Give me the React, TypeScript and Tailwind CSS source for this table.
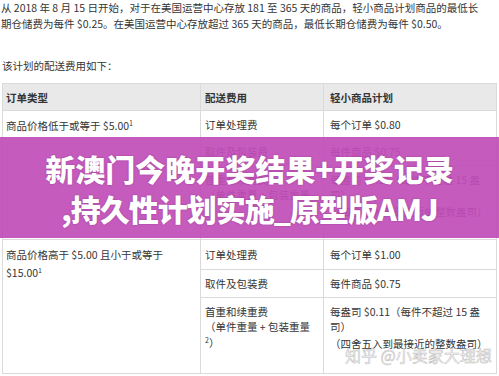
import React from 'react';

const cell = "border-r border-b border-[#dadada] text-[10.5px] leading-[15.5px] pt-[6px]";

const App: React.FC = () => {
  return (
    <div className="relative w-[499px] h-[376px] overflow-hidden bg-white text-[#353535] font-['Noto_Sans_CJK_SC',sans-serif]">
      {/* intro text */}
      <div className="pl-[1px] text-[10.5px] leading-[15.5px] whitespace-nowrap">
        <p>从 2018 年 8 月 15 日开始，对于在美国运营中心存放 181 至 365 天的商品，轻小商品计划商品的最低长</p>
        <p>期仓储费为每件 $0.25。在美国运营中心存放超过 365 天的商品，最低长期仓储费为每件 $0.50。</p>
        <p className="mt-[27px] pl-[1px]">该计划的配送费用如下：</p>
      </div>

      {/* fee table */}
      <div className="ml-[2px] mt-[9px] w-[495px] grid grid-cols-[198px_123px_173px] grid-rows-[27px_27px_28px_74px_30px_28px_76px] border-l border-t border-[#dadada]">
        <div className={`${cell} pl-[3px] bg-[#e9e9e9] font-bold`}>订单类型</div>
        <div className={`${cell} pl-[4px] bg-[#e9e9e9] font-bold`}>配送费用</div>
        <div className={`${cell} pl-[6px] bg-[#e9e9e9] font-bold`}>轻小商品计划</div>

        <div className={`${cell} row-span-3 pl-[3px] leading-[18px] pt-[4px]`}>
          商品价格低于或等于 $5.00<sup className="text-[7px]">1</sup>
        </div>
        <div className={`${cell} pl-[4px]`}>订单处理费</div>
        <div className={`${cell} pl-[6px]`}>每个订单 $0.80</div>
        <div className={`${cell} pl-[4px]`}>取件及包装费</div>
        <div className={`${cell} pl-[6px]`}>每件商品 $0.75</div>
        <div className={`${cell} pl-[4px]`}>
          <p>首重和续重费</p>
          <p>（单件重量 + 包装重量</p>
          <p><sup className="text-[7px]">2</sup>）</p>
        </div>
        <div className={`${cell} pl-[6px]`}>
          <p>每盎司 $0.11（每件不超过 15 盎</p>
          <p>司）</p>
          <p className="mt-[1px]">（四舍五入到最接近的整数盎司）</p>
        </div>

        <div className={`${cell} row-span-3 pl-[3px] leading-[18px] pt-[6px]`}>
          <p>商品价格高于 $5.00 且小于或等于</p>
          <p>$15.00<sup className="text-[7px]">1</sup></p>
        </div>
        <div className={`${cell} pl-[4px] pt-[7px]`}>订单处理费</div>
        <div className={`${cell} pl-[6px] pt-[7px]`}>每个订单 $1.00</div>
        <div className={`${cell} pl-[4px]`}>取件及包装费</div>
        <div className={`${cell} pl-[6px]`}>每件商品 $0.75</div>
        <div className={`${cell} pl-[4px]`}>
          <p>首重和续重费</p>
          <p>（单件重量 + 包装重量</p>
          <p><sup className="text-[7px]">2</sup>）</p>
        </div>
        <div className={`${cell} pl-[6px]`}>
          <p>每盎司 $0.11（每件不超过 15 盎</p>
          <p>司）</p>
          <p className="mt-[1px]">（四舍五入到最接近的整数盎司）</p>
        </div>
      </div>

      {/* purple headline banner */}
      <div className="absolute left-0 right-0 top-[137px] h-[101px] flex flex-col items-center justify-center bg-[rgba(193,77,184,0.92)] text-white font-black text-[30px] leading-[40px] [text-shadow:0_0_2px_rgba(60,0,60,0.35)]">
        <p>新澳门今晚开奖结果+开奖记录</p>
        <p className="tracking-[-1px]">,持久性计划实施_原型版AMJ</p>
      </div>

      {/* watermark */}
      <div className="absolute top-[346px] left-[345px] text-[16px] leading-[18px] whitespace-nowrap text-[#f8f8f8] [-webkit-text-stroke:0.5px_#bdbdbd]">
        知乎 @小卖家大理想
      </div>
    </div>
  );
};

export default App;
